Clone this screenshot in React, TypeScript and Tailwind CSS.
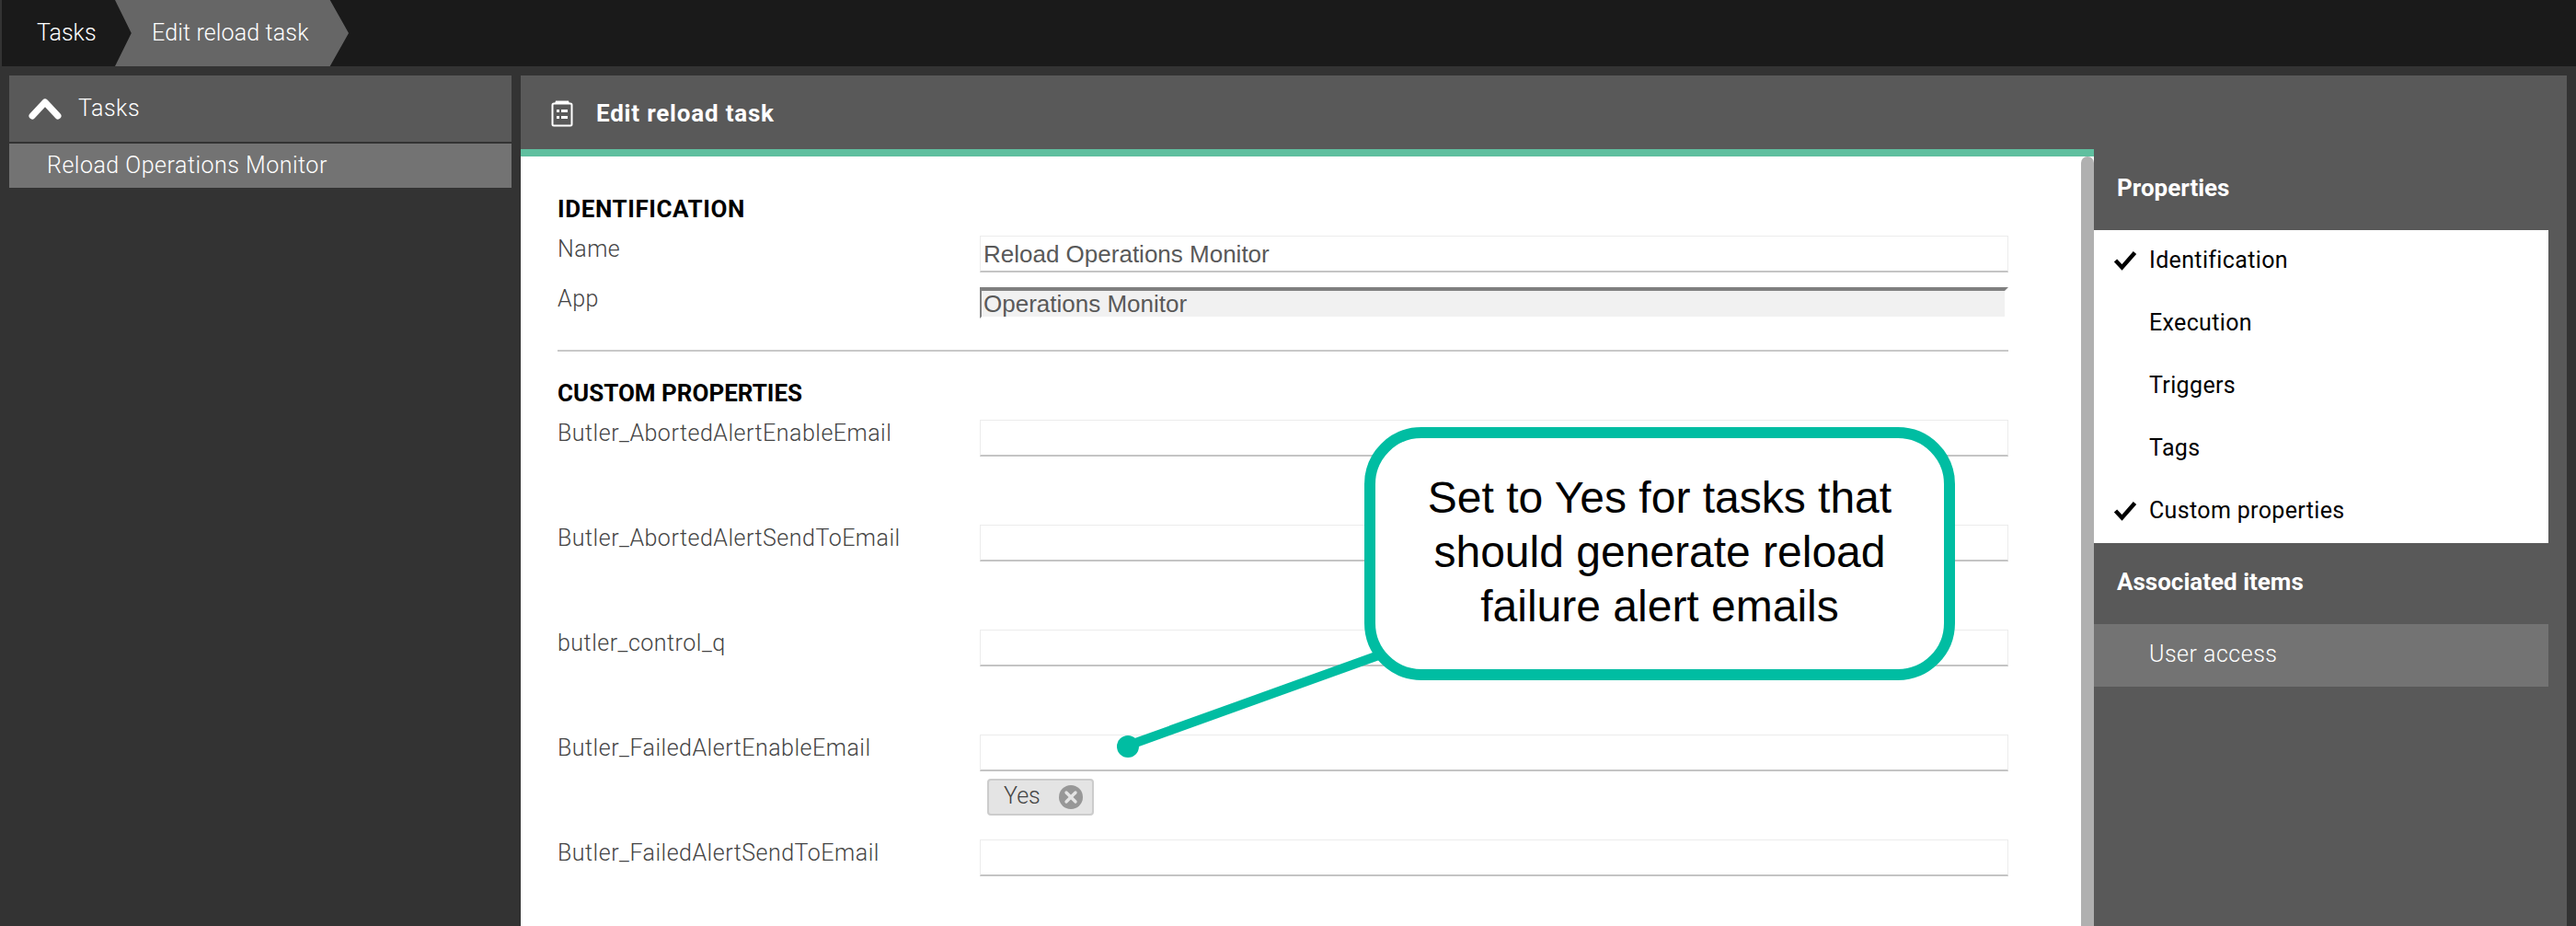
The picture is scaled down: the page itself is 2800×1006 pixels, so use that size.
import React from "react";
import { X } from "lucide-react";

const customProps = [
  { name: "Butler_AbortedAlertEnableEmail" },
  { name: "Butler_AbortedAlertSendToEmail" },
  { name: "butler_control_q" },
  { name: "Butler_FailedAlertEnableEmail", chip: "Yes" },
  { name: "Butler_FailedAlertSendToEmail" },
];

const navItems = [
  { label: "Identification", checked: true },
  { label: "Execution", checked: false },
  { label: "Triggers", checked: false },
  { label: "Tags", checked: false },
  { label: "Custom properties", checked: true },
];

const TaskIcon = () => (
  <svg width="24" height="30" viewBox="0 0 24 30" fill="none">
    <path d="M5 1.5h14l1 3H4z" fill="#fff" />
    <rect x="1.5" y="4.5" width="21" height="24" rx="1.5" stroke="#fff" strokeWidth="2" />
    <rect x="6" y="11" width="3" height="3" fill="#fff" />
    <rect x="11" y="11" width="7" height="3" fill="#fff" />
    <rect x="6" y="18" width="3" height="3" fill="#fff" />
    <rect x="11" y="18" width="7" height="3" fill="#fff" />
  </svg>
);

const Chevron = () => (
  <svg width="36" height="24" viewBox="0 0 36 24" fill="none">
    <path d="M4 20 18 5l14 15" stroke="#fff" strokeWidth="7" strokeLinecap="round" strokeLinejoin="round" />
  </svg>
);

const Check = () => (
  <svg width="26" height="22" viewBox="0 0 26 22" fill="none">
    <path d="M2.5 11 9.5 18.5 23.5 2.5" stroke="#000" strokeWidth="4.5" />
  </svg>
);

function TextBox({ value }: { value?: string }) {
  return (
    <div className="flex h-10 items-center border border-[#ececec] border-b-2 border-b-[#c4c4c4] bg-white pt-[2px] pl-[3px] font-['Liberation_Sans',Arial,sans-serif] text-[26px] text-[#595959]">
      {value}
    </div>
  );
}

function Row({ name, chip }: { name: string; chip?: string }) {
  return (
    <div className="flex h-[114px]">
      <div className="w-[459px] text-[25px] leading-[30px] font-light tracking-[0.5px] text-[#444444]">{name}</div>
      <div className="flex-1">
        <TextBox />
        {chip && (
          <div className="mt-2 ml-2 flex h-10 w-[116px] items-center justify-between rounded-[4px] border-2 border-[#cccccc] bg-[#e4e4e4] pr-[10px] pb-[2px] pl-4 text-[25px] font-light text-[#444444]">
            {chip}
            <span className="mt-[2px] flex h-[26px] w-[26px] items-center justify-center rounded-full bg-[#979797]">
              <X size={20} strokeWidth={4} color="#e4e4e4" />
            </span>
          </div>
        )}
      </div>
    </div>
  );
}

function Callout() {
  return (
    <>
      <svg className="absolute top-[700px] left-[1200px]" width="320" height="130" viewBox="0 0 320 130" fill="none">
        <line x1="26" y1="110" x2="304" y2="10" stroke="#00bda2" strokeWidth="10" />
        <circle cx="26" cy="111" r="12" fill="#00bda2" />
      </svg>
      <div className="absolute top-[464px] left-[1483px] flex h-[275px] w-[642px] items-center justify-center rounded-[62px] border-[12px] border-[#00bda2] bg-white pb-[5px] text-center font-['Liberation_Sans',Arial,sans-serif] text-[48px] leading-[59px] text-black">
        <p>
          Set to Yes for tasks that
          <br />
          should generate reload
          <br />
          failure alert emails
        </p>
      </div>
    </>
  );
}

export default function App() {
  return (
    <div className="relative h-[1006px] w-[2800px] overflow-hidden bg-[#333333] font-['Roboto','Noto_Sans',sans-serif]">
      <header className="ml-[2px] flex h-[72px] bg-[#1a1a1a] text-[25px] font-light text-white">
        <div className="flex w-[123px] items-center pl-[38px]">Tasks</div>
        <div className="flex w-[254px] items-center bg-[#666666] pl-[40px] tracking-[0.15px] [clip-path:polygon(0_0,92%_0,100%_50%,92%_100%,0_100%,7%_50%)]">
          Edit reload task
        </div>
      </header>

      <div className="flex gap-[10px] pt-[10px] pr-[10px] pl-[10px]">
        <aside className="w-[546px] shrink-0">
          <div className="flex h-[72px] items-center gap-[18px] bg-[#595959] pl-[21px] text-[25px] font-light tracking-[0.5px] text-white">
            <Chevron />
            Tasks
          </div>
          <div className="mt-[2px] flex h-[48px] items-center bg-[#737373] pl-[41px] text-[25px] font-light tracking-[0.5px] text-white">
            Reload Operations Monitor
          </div>
        </aside>

        <main className="flex-1 bg-[#595959]">
          <div className="flex h-[80px] items-center gap-[25px] pt-[2px] pl-[33px] text-[26px] font-bold tracking-[0.8px] text-white">
            <TaskIcon />
            Edit reload task
          </div>
          <div className="flex">
            <section className="flex h-[844px] w-[1710px] shrink-0 border-t-[8px] border-[#5fbf9f] bg-white">
              <div className="w-[1696px] pt-[44px] pr-[79px] pl-[40px]">
                <h2 className="text-[26px] leading-[26px] font-bold tracking-[0.6px] text-black">IDENTIFICATION</h2>
                <div className="mt-[16px] flex h-[56px]">
                  <div className="w-[459px] text-[25px] leading-[30px] font-light tracking-[0.5px] text-[#444444]">Name</div>
                  <div className="flex-1">
                    <TextBox value="Reload Operations Monitor" />
                  </div>
                </div>
                <div className="flex h-[68px]">
                  <div className="-mt-[2px] w-[459px] text-[25px] leading-[30px] font-light tracking-[0.5px] text-[#444444]">App</div>
                  <div className="flex h-[34px] flex-1 items-center border-t-[4px] border-r-[4px] border-b-[2px] border-l-[2px] border-[#808080] border-r-white border-b-white bg-[#f1f1f1] pl-[2px] font-['Liberation_Sans',Arial,sans-serif] text-[26px] text-[#595959]">
                    Operations Monitor
                  </div>
                </div>
                <div className="h-[2px] bg-[#c8c8c8]" />
                <h2 className="mt-[32px] text-[26px] leading-[26px] font-bold text-black">CUSTOM PROPERTIES</h2>
                <div className="mt-[16px]">
                  {customProps.map((p) => (
                    <Row key={p.name} name={p.name} chip={p.chip} />
                  ))}
                </div>
              </div>
              <div className="w-[14px] rounded-t-[8px] bg-[#b0b0b0]" />
            </section>

            <div className="flex-1">
              <div className="flex h-[88px] items-center pb-[3px] pl-[25px] text-[26px] font-bold text-white">Properties</div>
              <ul className="mr-[20px] bg-white">
                {navItems.map((item) => (
                  <li key={item.label} className="flex h-[68px] items-center pb-[2px] text-[25px] tracking-[0.35px] text-black">
                    <span className="flex w-[60px] justify-end pr-[13px]">{item.checked && <Check />}</span>
                    {item.label}
                  </li>
                ))}
              </ul>
              <div className="flex h-[88px] items-center pb-[3px] pl-[25px] text-[26px] font-bold text-white">Associated items</div>
              <div className="mr-[20px] flex h-[68px] items-center bg-[#737373] pb-[2px] pl-[60px] text-[25px] font-light tracking-[0.5px] text-white">User access</div>
            </div>
          </div>
        </main>
      </div>

      <Callout />
    </div>
  );
}
